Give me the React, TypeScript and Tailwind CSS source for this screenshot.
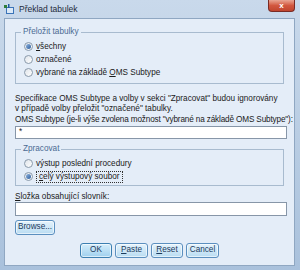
import React from 'react';

const font = { fontFamily: '"Liberation Sans", Arial, sans-serif' };

const Radio: React.FC<{ checked?: boolean; children: React.ReactNode; focus?: boolean }> = ({ checked, children, focus }) => (
  <div className="flex h-[13px] items-center gap-[3px]">
    <span className="flex h-[9px] w-[9px] items-center justify-center rounded-full border border-[#8a9aab] bg-gradient-to-br from-[#dfe4ea] to-white">
      {checked && <span className="h-[5px] w-[5px] rounded-full bg-gradient-to-br from-[#8fb2dd] to-[#2d5f9e]" />}
    </span>
    <span className={focus ? 'border border-dotted border-[#333] px-[2px] leading-[10px]' : 'leading-[10px]'}>{children}</span>
  </div>
);

const Btn: React.FC<{ children: React.ReactNode; w: string; primary?: boolean }> = ({ children, w, primary }) => (
  <div
    className={`flex h-[15px] ${w} items-center justify-center rounded-[3px] border ${
      primary ? 'border-[#3c7fb1] from-[#d6eefb] to-[#9fd0ee]' : 'border-[#5b8fbf] from-[#e5f3fc] to-[#b9dcf2]'
    } bg-gradient-to-b text-[#1b3a5c] shadow-[inset_0_0_0_1px_rgba(255,255,255,0.6)]`}
  >
    {children}
  </div>
);

export default function App() {
  return (
    <div style={font} className="flex h-[270px] w-[300px] flex-col bg-gradient-to-b from-[#c9d9eb] via-[#b9cde3] to-[#a9c1dc] text-[8.2px] text-[#1a1a1a]">
      {/* Title bar */}
      <div className="relative flex h-[18px] items-center pl-[4px]">
        <svg width="10" height="10" viewBox="0 0 10 10" className="mr-[5px]">
          <rect x="2" y="3" width="8" height="7" fill="#3b74b8" />
          <rect x="3" y="4" width="6" height="5" fill="#dbe9f7" />
          <rect x="0" y="1" width="3" height="3" fill="#2d7e3a" />
          <rect x="4" y="0" width="1.5" height="4" fill="#1f5aa0" />
        </svg>
        <span className="text-[8.5px] text-[#1e2a3a]">Překlad tabulek</span>
        <div className="absolute right-[5px] top-0 flex h-[12px] w-[27px] items-center justify-center rounded-b-[4px] border border-t-0 border-[#7a2b24] bg-gradient-to-b from-[#e8a493] via-[#d2573f] to-[#c0452f]">
          <span className="text-[8px] font-bold leading-none text-white">x</span>
        </div>
      </div>

      {/* Content */}
      <div className="mb-[4px] ml-[4px] mr-[5px] flex flex-1 flex-col border border-[#8fa7c2] bg-[#e4edf8] pl-[10px] pr-[7px] pt-[8px]">
        <fieldset className="mr-[3px] h-[57px] border border-[#a8bbcf] pl-[8px] pt-[3px]">
          <legend className="ml-[-3px] px-[2px] leading-[10px] text-[#4a6a93]">Přeložit tabulky</legend>
          <Radio checked>
            <u>v</u>šechny
          </Radio>
          <Radio>označené</Radio>
          <Radio>
            vybrané na základě <u>O</u>MS Subtype
          </Radio>
        </fieldset>

        <div className="mt-[10px] leading-[10px]">
          Specifikace OMS Subtype a volby v sekci "Zpracovat" budou ignorovány
          <br />v případě volby přeložit "označené" tabulky.
        </div>
        <div className="mt-[1px] whitespace-nowrap leading-[10px] tracking-[-0.15px]">
          OMS Subtype (je-li výše zvolena možnost "vybrané na základě OMS Subtype"):
        </div>
        <div className="mt-[1px] flex h-[13px] items-center border border-[#8796a8] bg-white px-[3px]">*</div>

        <fieldset className="mr-[3px] mt-[5px] h-[42px] border border-[#a8bbcf] pl-[8px] pt-[3px]">
          <legend className="ml-[-3px] px-[2px] leading-[10px] text-[#4a6a93]">Zpracovat</legend>
          <Radio>výstup poslední procedury</Radio>
          <Radio checked focus>
            <u>c</u>elý výstupový soubor
          </Radio>
        </fieldset>

        <div className="mt-[6px] leading-[10px]">
          <u>S</u>ložka obsahující slovník:
        </div>
        <div className="h-[14px] border border-[#8796a8] bg-white" />

        <div className="mt-[4px] flex">
          <Btn w="w-[40px]">Browse...</Btn>
        </div>

        <div className="mt-[8px] flex gap-[3px] pl-[65px]">
          <Btn w="w-[32px]" primary>
            OK
          </Btn>
          <Btn w="w-[33px]">
            <u>P</u>aste
          </Btn>
          <Btn w="w-[32px]">
            <u>R</u>eset
          </Btn>
          <Btn w="w-[33px]">Cancel</Btn>
        </div>
      </div>
    </div>
  );
}
